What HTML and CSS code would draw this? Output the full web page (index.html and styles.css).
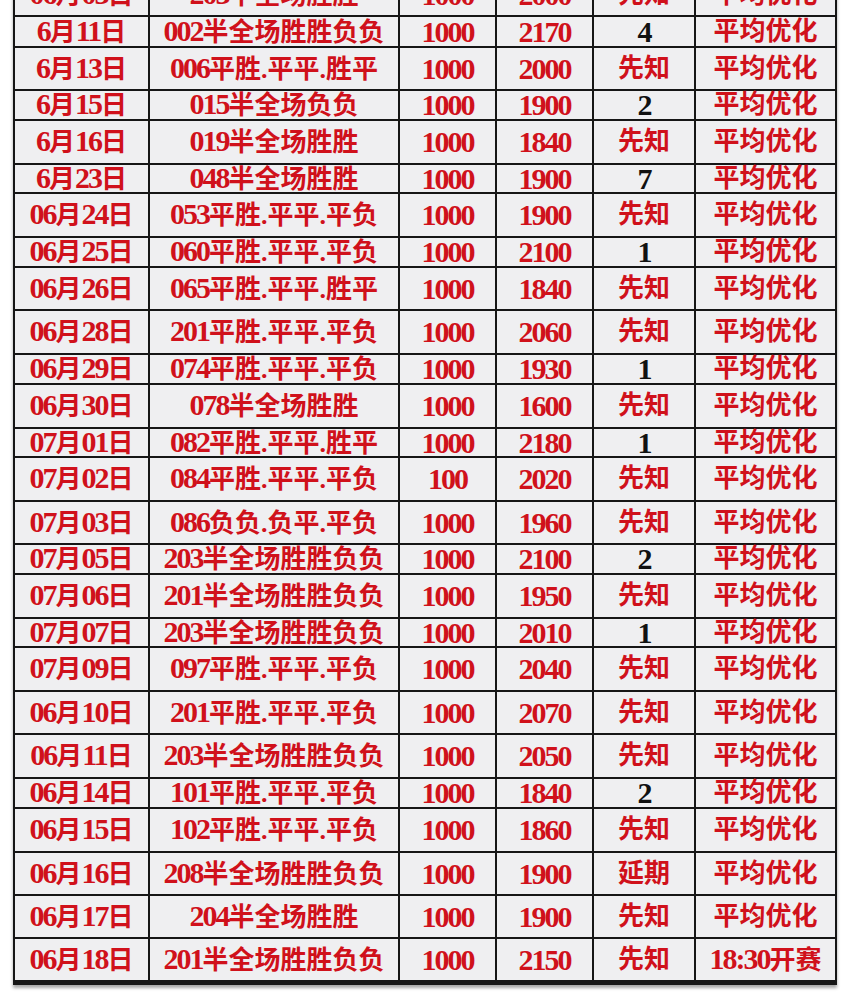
FILE: index.html
```html
<!DOCTYPE html>
<html lang="zh-CN">
<head>
<meta charset="utf-8">
<title>平均优化记录</title>
<link rel="stylesheet" href="styles.css">
</head>
<body>
<div class="page">
<table class="sheet">
<colgroup>
<col class="c-date"><col class="c-bet"><col class="c-stake"><col class="c-win"><col class="c-res"><col class="c-note">
</colgroup>
<tbody>
<tr class="r43"><td><span class="n">06</span>月<span class="n">03</span>日</td><td><span class="n">203</span>半全场胜胜</td><td class="n">1000</td><td class="n">2000</td><td>先知</td><td>平均优化</td></tr>
<tr class="r31"><td><span class="n">6</span>月<span class="n">11</span>日</td><td><span class="n">002</span>半全场胜胜负负</td><td class="n">1000</td><td class="n">2170</td><td class="n k">4</td><td>平均优化</td></tr>
<tr class="r43"><td><span class="n">6</span>月<span class="n">13</span>日</td><td><span class="n">006</span>平胜.平平.胜平</td><td class="n">1000</td><td class="n">2000</td><td>先知</td><td>平均优化</td></tr>
<tr class="r30"><td><span class="n">6</span>月<span class="n">15</span>日</td><td><span class="n">015</span>半全场负负</td><td class="n">1000</td><td class="n">1900</td><td class="n k">2</td><td>平均优化</td></tr>
<tr class="r44"><td><span class="n">6</span>月<span class="n">16</span>日</td><td><span class="n">019</span>半全场胜胜</td><td class="n">1000</td><td class="n">1840</td><td>先知</td><td>平均优化</td></tr>
<tr class="r29"><td><span class="n">6</span>月<span class="n">23</span>日</td><td><span class="n">048</span>半全场胜胜</td><td class="n">1000</td><td class="n">1900</td><td class="n k">7</td><td>平均优化</td></tr>
<tr class="r44"><td><span class="n">06</span>月<span class="n">24</span>日</td><td><span class="n">053</span>平胜.平平.平负</td><td class="n">1000</td><td class="n">1900</td><td>先知</td><td>平均优化</td></tr>
<tr class="r30"><td><span class="n">06</span>月<span class="n">25</span>日</td><td><span class="n">060</span>平胜.平平.平负</td><td class="n">1000</td><td class="n">2100</td><td class="n k">1</td><td>平均优化</td></tr>
<tr class="r43"><td><span class="n">06</span>月<span class="n">26</span>日</td><td><span class="n">065</span>平胜.平平.胜平</td><td class="n">1000</td><td class="n">1840</td><td>先知</td><td>平均优化</td></tr>
<tr class="r44"><td><span class="n">06</span>月<span class="n">28</span>日</td><td><span class="n">201</span>平胜.平平.平负</td><td class="n">1000</td><td class="n">2060</td><td>先知</td><td>平均优化</td></tr>
<tr class="r30"><td><span class="n">06</span>月<span class="n">29</span>日</td><td><span class="n">074</span>平胜.平平.平负</td><td class="n">1000</td><td class="n">1930</td><td class="n k">1</td><td>平均优化</td></tr>
<tr class="r44"><td><span class="n">06</span>月<span class="n">30</span>日</td><td><span class="n">078</span>半全场胜胜</td><td class="n">1000</td><td class="n">1600</td><td>先知</td><td>平均优化</td></tr>
<tr class="r29"><td><span class="n">07</span>月<span class="n">01</span>日</td><td><span class="n">082</span>平胜.平平.胜平</td><td class="n">1000</td><td class="n">2180</td><td class="n k">1</td><td>平均优化</td></tr>
<tr class="r44"><td><span class="n">07</span>月<span class="n">02</span>日</td><td><span class="n">084</span>平胜.平平.平负</td><td class="n">100</td><td class="n">2020</td><td>先知</td><td>平均优化</td></tr>
<tr class="r43"><td><span class="n">07</span>月<span class="n">03</span>日</td><td><span class="n">086</span>负负.负平.平负</td><td class="n">1000</td><td class="n">1960</td><td>先知</td><td>平均优化</td></tr>
<tr class="r30"><td><span class="n">07</span>月<span class="n">05</span>日</td><td><span class="n">203</span>半全场胜胜负负</td><td class="n">1000</td><td class="n">2100</td><td class="n k">2</td><td>平均优化</td></tr>
<tr class="r44"><td><span class="n">07</span>月<span class="n">06</span>日</td><td><span class="n">201</span>半全场胜胜负负</td><td class="n">1000</td><td class="n">1950</td><td>先知</td><td>平均优化</td></tr>
<tr class="r29"><td><span class="n">07</span>月<span class="n">07</span>日</td><td><span class="n">203</span>半全场胜胜负负</td><td class="n">1000</td><td class="n">2010</td><td class="n k">1</td><td>平均优化</td></tr>
<tr class="r44"><td><span class="n">07</span>月<span class="n">09</span>日</td><td><span class="n">097</span>平胜.平平.平负</td><td class="n">1000</td><td class="n">2040</td><td>先知</td><td>平均优化</td></tr>
<tr class="r43"><td><span class="n">06</span>月<span class="n">10</span>日</td><td><span class="n">201</span>平胜.平平.平负</td><td class="n">1000</td><td class="n">2070</td><td>先知</td><td>平均优化</td></tr>
<tr class="r44"><td><span class="n">06</span>月<span class="n">11</span>日</td><td><span class="n">203</span>半全场胜胜负负</td><td class="n">1000</td><td class="n">2050</td><td>先知</td><td>平均优化</td></tr>
<tr class="r30"><td><span class="n">06</span>月<span class="n">14</span>日</td><td><span class="n">101</span>平胜.平平.平负</td><td class="n">1000</td><td class="n">1840</td><td class="n k">2</td><td>平均优化</td></tr>
<tr class="r44"><td><span class="n">06</span>月<span class="n">15</span>日</td><td><span class="n">102</span>平胜.平平.平负</td><td class="n">1000</td><td class="n">1860</td><td>先知</td><td>平均优化</td></tr>
<tr class="r43"><td><span class="n">06</span>月<span class="n">16</span>日</td><td><span class="n">208</span>半全场胜胜负负</td><td class="n">1000</td><td class="n">1900</td><td>延期</td><td>平均优化</td></tr>
<tr class="r43"><td><span class="n">06</span>月<span class="n">17</span>日</td><td><span class="n">204</span>半全场胜胜</td><td class="n">1000</td><td class="n">1900</td><td>先知</td><td>平均优化</td></tr>
<tr class="r43 last"><td><span class="n">06</span>月<span class="n">18</span>日</td><td><span class="n">201</span>半全场胜胜负负</td><td class="n">1000</td><td class="n">2150</td><td>先知</td><td><span class="n">18:30</span>开赛</td></tr>
</tbody>
</table>
</div>
</body>
</html>
```

FILE: styles.css
```css
html, body {
  margin: 0;
  padding: 0;
  background: #ffffff;
}

.page {
  width: 850px;
  height: 997px;
  overflow: hidden;
  padding-left: 13px;
  box-sizing: border-box;
}

.sheet {
  margin-top: -28px;
  width: 824px;
  table-layout: fixed;
  border-collapse: collapse;
  background: #efeff1;
  font-family: "Liberation Serif", "Noto Sans CJK SC", serif;
  font-weight: 700;
  font-size: 26px;
  line-height: 20px;
  color: #d0111b;
  box-shadow: 0 3px 3px rgba(0, 0, 0, 0.35);
}

.c-date { width: 135px; }
.c-bet { width: 250px; }
.c-stake { width: 97px; }
.c-win { width: 97px; }
.c-res { width: 102px; }
.c-note { width: 141px; }

.sheet td {
  border: 2px solid #161616;
  padding: 0;
  text-align: center;
  vertical-align: middle;
  white-space: nowrap;
}

.sheet .last td {
  border-bottom-width: 5px;
}

.n {
  font-family: "Liberation Serif", serif;
  font-size: 30px;
  line-height: 20px;
  letter-spacing: -2px;
}

.k {
  color: #111111;
}

.r29 td { height: 27px; }
.r30 td { height: 28px; }
.r31 td { height: 29px; }
.r43 td { height: 41px; }
.r44 td { height: 42px; }
```
